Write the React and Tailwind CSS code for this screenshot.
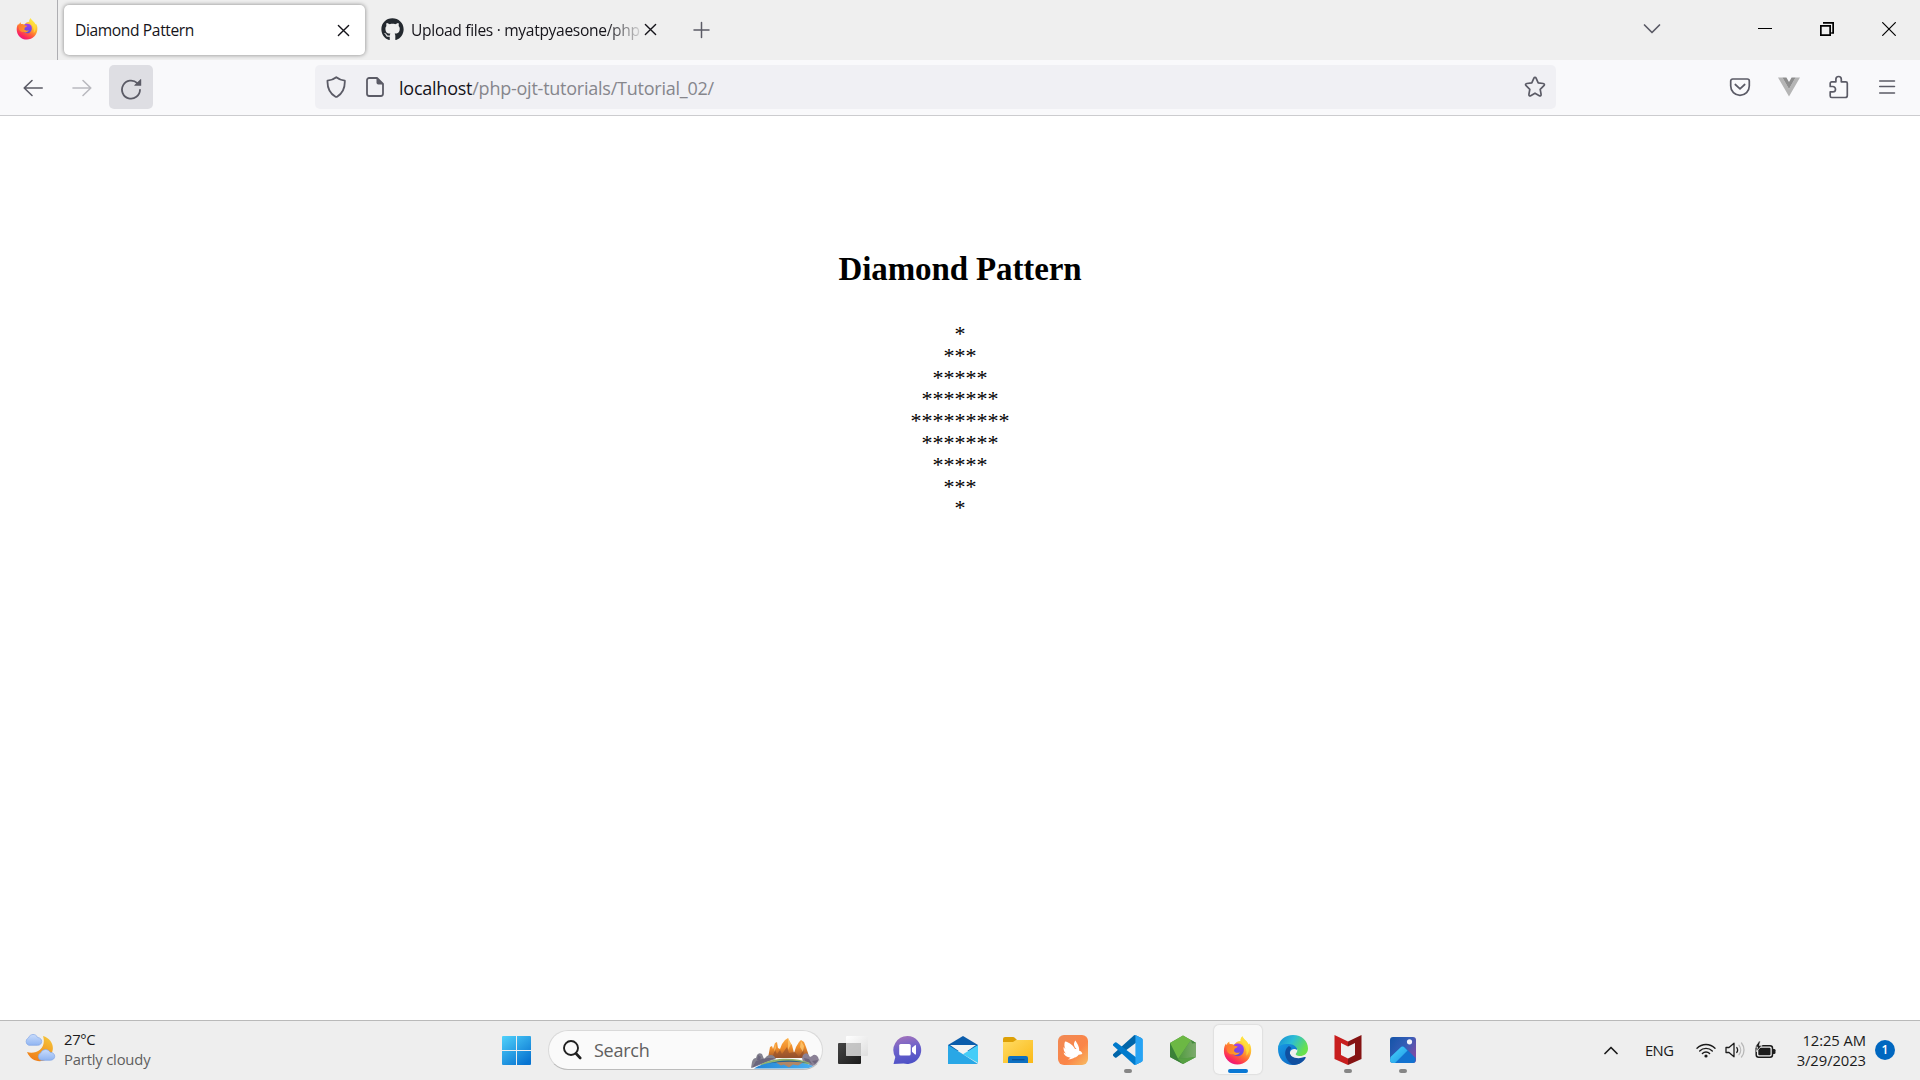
import React from "react";
import { FaGithub } from "react-icons/fa";

const diamond = [1, 3, 5, 7, 9, 7, 5, 3, 1];

function Firefox({ size, id }) {
  const a = id + "a", b = id + "b", c = id + "c";
  return (
    <svg width={size} height={size} viewBox="0 0 32 32">
      <defs>
        <linearGradient id={a} x1="0.8" y1="0.05" x2="0.25" y2="1">
          <stop offset="0" stopColor="#fff44f" />
          <stop offset="0.35" stopColor="#ffb52e" />
          <stop offset="0.6" stopColor="#ff6a35" />
          <stop offset="0.85" stopColor="#fb2460" />
          <stop offset="1" stopColor="#e31587" />
        </linearGradient>
        <linearGradient id={b} x1="0.6" y1="0" x2="0.4" y2="1">
          <stop offset="0" stopColor="#a03df5" />
          <stop offset="1" stopColor="#5b4fd8" />
        </linearGradient>
        <linearGradient id={c} x1="0" y1="0" x2="1" y2="0.4">
          <stop offset="0" stopColor="#ff7139" />
          <stop offset="1" stopColor="#ffa21f" />
        </linearGradient>
      </defs>
      <path fill={`url(#${a})`} d="M19.4 5.4C19.2 3 20.3 1.200 21.600.3c.3 3 5 4.600 6.800 9.200.4-.5.500-1 .5-1.500 1.600 2 2.400 5 2.200 8.500C30.800 25 24.200 31.400 16 31.400 7.600 31.400 1 25 1 16.600c0-3.300.8-6 2.300-8.200l.4 1.900C4.500 8.200 5.600 7 7 6.100c-.2 1 0 2 .4 2.800 1.800-.3 3.400 0 4.800.7 1.600-2.500 4-4 7.200-4.200z" />
      <path fill={`url(#${b})`} d="M11.500 10.400c2.700-3.200 8.500-2.800 10.700.8 2.400 5-.5 11.100-5.900 11.100-4.400 0-7.500-3.200-7.300-7.600 1-.5 1.700-1.500 2.500-4.300z" />
      <path fill={`url(#${c})`} d="M4 11c1.500-1.500 3.200-2 5-2l3 1.200c.9.700 2.300 1.100 4.200 1.100 0 1.400-2.300 2-3.200 2.600-.4 1-.8 1.800-.9 2.600 1.600 2.600 4.700 2.200 6.600 1.400-1.600 2.900-5.300 4-7.800 2.200C7 21 3 17.500 4 11z" />
      <path fill="#ffdf3d" opacity=".75" d="M19.400 5.400C19.300 3 20.300 1.200 21.600.3c.3 3 5 4.600 6.600 9.400 1.500 5 .4 9.300-2.400 12 .9-6.200-1.200-11-6.400-16.300z" />
    </svg>
  );
}

function Cross({ size, w = 1.5, color = "#15141a" }) {
  return (
    <svg width={size} height={size} viewBox="0 0 14 14" fill="none" stroke={color} strokeWidth={w} strokeLinecap="round">
      <path d="M1.500 1.500l11 11M12.500 1.500l-11 11" />
    </svg>
  );
}

function TabStrip() {
  return (
    <div className="flex h-[60px] items-center bg-[#efefef]">
      <div className="flex h-full w-[58px] items-center justify-center border-r border-[#aeaeb2] pr-[3px] pb-[2px]">
        <Firefox size={22} id="ft" />
      </div>
      <div className="ml-[6px] flex h-[50px] w-[301px] items-center justify-between rounded-[5px] bg-white pl-[11px] pr-[15px] shadow-[0_0_4px_rgba(0,0,0,0.45)]">
        <span className="pt-[2px] text-[15.600px] tracking-[-0.380px] text-[#15141a]">Diamond Pattern</span>
        <Cross size={13} />
      </div>
      <div className="ml-[16px] flex w-[276px] items-center">
        <FaGithub size={23} color="#24292f" />
        <div className="ml-[7px] w-[231px] whitespace-nowrap pt-[2px] text-[15.600px] tracking-[-0.320px] text-[#15141a] [mask-image:linear-gradient(to_right,black_195px,transparent_234px)]">
          Upload files · myatpyaesone/php
        </div>
        <div className="ml-[2px] flex-none"><Cross size={13} /></div>
      </div>
      <svg className="ml-[35px]" width="18" height="18" viewBox="0 0 18 18" stroke="#5b5b66" strokeWidth="1.500" strokeLinecap="round">
        <path d="M9.500 1.500v15M2 9h15" />
      </svg>
      <div className="ml-auto flex h-full items-center pb-[3px]">
        <svg className="mr-[97px]" width="18" height="12" viewBox="0 0 18 12" fill="none" stroke="#5b5b66" strokeWidth="1.700" strokeLinecap="round" strokeLinejoin="round">
          <path d="M1.500 2L9 9.500 16.500 2" />
        </svg>
        <div className="h-px w-[14px] bg-black" />
        <svg className="ml-[48px]" width="14" height="14" viewBox="0 0 14 14" fill="none" stroke="#000">
          <path strokeWidth="1.700" d="M.85 3.850h9.300v9.300H.85z" />
          <path strokeWidth="1.700" d="M3 .85h10.150V11h-2" />
        </svg>
        <svg className="ml-[48px] mr-[24px]" width="14" height="14" viewBox="0 0 14 14" stroke="#000" strokeWidth="1.200">
          <path d="M.3.3l13.400 13.400M13.700.3L.3 13.700" />
        </svg>
      </div>
    </div>
  );
}

const line = { fill: "none", stroke: "#5b5b66", strokeWidth: 1.6, strokeLinecap: "round", strokeLinejoin: "round" };

function Toolbar() {
  return (
    <div className="flex h-[56px] items-center border-b border-[#cccccf] bg-[#f9f9fb] pb-[1px]">
      <svg className="ml-[23px] mt-[1px]" width="20" height="18" viewBox="0 0 20 18" {...line}>
        <path d="M9 1.500L1.200 9 9 16.500M1.200 9h18" />
      </svg>
      <svg className="ml-[29px] mt-[1px] opacity-40" width="20" height="18" viewBox="0 0 20 18" {...line}>
        <path d="M11 1.500L18.800 9 11 16.500M18.800 9H1" />
      </svg>
      <div className="ml-[17px] flex h-[44px] w-[44px] items-center justify-center rounded-[5px] bg-[#dedee3]">
        <svg className="mt-[3px]" width="22" height="22" viewBox="0 0 22 22" {...line}>
          <path strokeWidth="1.800" d="M17.300 5.200A9 9 0 1 0 20 11.800" />
          <path fill="#5b5b66" stroke="none" d="M20.500 1.200c.4-.4.700-.2.700.3v6.300h-6.300c-.6 0-.8-.3-.4-.7z" />
        </svg>
      </div>
      <div className="ml-[162px] flex h-[44px] w-[1241px] items-center rounded-[5px] bg-[#f0f0f4]">
        <svg className="ml-[11px]" width="20" height="22" viewBox="0 0 20 22" {...line}>
          <path strokeWidth="1.800" d="M10.300 1.200c2.600 2.200 5.500 3 8.500 3.400.3 7.600-2 12.600-7.700 16.100q-.8.500-1.600 0C3.500 17.200 1.200 12.200 1.500 4.600 4.800 4.200 7.700 3.400 10.300 1.200z" />
        </svg>
        <svg className="ml-[20px]" width="18" height="20" viewBox="0 0 18 20" {...line}>
          <path strokeWidth="1.800" d="M3.200 1h7.800l6 6v9.800a2.200 2.200 0 0 1-2.200 2.200H3.200A2.200 2.200 0 0 1 1 16.800V3.200A2.200 2.200 0 0 1 3.200 1z" />
          <path fill="#5b5b66" stroke="none" d="M10.500 1l6.500 6.500h-4.700a1.800 1.800 0 0 1-1.800-1.800z" />
        </svg>
        <div className="ml-[15px] whitespace-nowrap pt-[3px] text-[18px] tracking-[-0.240px] text-[#15141a]">
          localhost<span className="text-[#86868c]">/php-ojt-tutorials/Tutorial_02/</span>
        </div>
        <svg className="ml-auto mr-[10px]" width="22" height="22" viewBox="0 0 22 22" {...line}>
          <path strokeWidth="1.700" d="M9.900 2.200c.5-1.100 1.700-1.100 2.200 0l2.100 4.600 5 .7c1.300.2 1.600 1.300.7 2.200l-3.700 3.600.9 5.100c.2 1.200-.8 1.800-1.800 1.300L11 17.200l-4.300 2.500c-1 .5-2-.1-1.800-1.300l.9-5.100-3.700-3.600c-.9-.9-.6-2 .7-2.200l5-.7z" />
        </svg>
      </div>
      <svg className="ml-[173px]" width="22" height="20" viewBox="0 0 22 20" {...line}>
        <path strokeWidth="1.700" d="M3.700 2h14.600a2 2 0 0 1 2 2v5a9.300 9.300 0 0 1-18.600 0V4a2 2 0 0 1 2-2z" />
        <path strokeWidth="1.700" d="M6.300 7.500l4.700 4.300 4.700-4.300" />
      </svg>
      <svg className="ml-[27px]" width="22" height="20" viewBox="0 0 22 20">
        <path fill="#b5b5b5" d="M0 .5h4.400L11 12 17.600.5H22L11 19.500z" />
        <path fill="#8d8d8d" d="M4.400.5h4L11 5 13.600.5h4L11 12z" />
      </svg>
      <svg className="ml-[28px]" width="22" height="24" viewBox="0 0 22 24" {...line}>
        <path strokeWidth="1.700" d="M3.700 22.500h13.600a2 2 0 0 0 2-2V8.300a1.500 1.500 0 0 0-1.500-1.500h-4.500V4.200a2.700 2.700 0 0 0-5.400 0v2.600H3.700a1.500 1.500 0 0 0-1.500 1.500v3.200h2.600a2.600 2.600 0 0 1 0 5.400H2.200V21a1.500 1.500 0 0 0 1.500 1.500z" />
      </svg>
      <svg className="ml-[28px]" width="18" height="16" viewBox="0 0 18 16" {...line}>
        <path strokeWidth="1.500" d="M1.700 2h14.800M1.700 7.500h14.800M1.700 14h14.800" />
      </svg>
    </div>
  );
}

function Weather() {
  return (
    <svg width="32" height="30" viewBox="0 0 32 30">
      <defs>
        <linearGradient id="moon" x1="0.7" y1="0" x2="0.2" y2="1">
          <stop offset="0" stopColor="#f5c238" /><stop offset="1" stopColor="#ef7a16" />
        </linearGradient>
        <linearGradient id="cloud" x1="0" y1="0" x2="0" y2="1">
          <stop offset="0" stopColor="#c9dcfb" /><stop offset="1" stopColor="#8fb4f2" />
        </linearGradient>
      </defs>
      <path fill="url(#moon)" d="M19 3c9 2.500 12.300 11.500 8 18.500C22 30.500 8 31 3 19c9 3 20-4 16-16z" />
      <path fill="url(#cloud)" stroke="#82a6e6" strokeWidth=".7" d="M4.800 12.300a4 4 0 0 1-.4-7.400C6 .5 12 .3 13.600 4.500c5.500.2 5.500 7.800 0 7.800z" />
      <path fill="url(#cloud)" stroke="#82a6e6" strokeWidth=".7" d="M17 27.300a4 4 0 0 1-.2-7.500c1.800-4.200 7.500-4.200 9.200-.6 6.300.2 6.300 8.100 0 8.100z" />
    </svg>
  );
}

function SearchArt() {
  return (
    <svg width="68" height="32" viewBox="0 0 68 32">
      <defs>
        <linearGradient id="peak" x1="0" y1="0" x2=".1" y2="1">
          <stop offset="0" stopColor="#ffb24a" /><stop offset=".55" stopColor="#ee8c2a" /><stop offset="1" stopColor="#a2592f" />
        </linearGradient>
        <linearGradient id="lake" x1="0" y1="0" x2="1" y2="0">
          <stop offset="0" stopColor="#2185d6" /><stop offset="1" stopColor="#4fb2f2" />
        </linearGradient>
      </defs>
      <path fill="url(#peak)" d="M17 21l2-11 2-1 1 3 2-6 2-1 1 6 2 1 2-5 3-4 3-2 2 4 2 3 2 8 2-6 3-5 2-2 3 2 2 5 2 6 1 5z" />
      <path fill="#8f4c2c" d="M21 21l3-8 2 4 3-4 2 4 5-7 2 6 6-1 4 5 5-8-1 9z" opacity=".6" />
      <path fill="#ffd07a" d="M37 1l3 6-3 6 0-8zM50 4l3 5-1 6-3-5zM24 6l1 5-2 4z" opacity=".7" />
      <path fill="#84828f" d="M0 31l1-6q1-4 4-4l1-3q2-3 5-1l2 5 3-3q4-2 7 0l2 3L9 27z" />
      <path fill="#655f78" d="M1 31l4-7 6-2 6-1 7 0-13 6zM7 18l3 2-1 3-3 0z" opacity=".8" />
      <path fill="#8b8196" d="M51 21l1-3q3-3 5-1l2 3 2-1q3-3 6 1l1 3-2 5-5 1-9-4z" />
      <path fill="#665e75" d="M53 21l5 1 3 5-7-3zM61 24l6-1-3 4z" opacity=".8" />
      <path fill="#91b26e" d="M9 28c12-8 36-8 50-2l-4 3H14z" />
      <path fill="url(#lake)" d="M3 31.500c14-9 46-9 62-1l1 1z" />
      <path fill="#29608f" d="M18 26.500c11-4 27-4 40 0-12-2-28-2-40 0z" />
      <path fill="#c08457" d="M25 25.500l5 3 3-1 5 3 4-3 5 1 5-3c-9-1-18-1-27 0z" opacity=".9" />
    </svg>
  );
}

const icons = {
  view: (
    <svg width="32" height="32" viewBox="0 0 32 32">
      <defs>
        <linearGradient id="tv" x1="0" y1="0" x2="1" y2="1"><stop offset="0" stopColor="#454545" /><stop offset="1" stopColor="#1b1b1b" /></linearGradient>
        <linearGradient id="tw" x1="0" y1="0" x2="1" y2="1"><stop offset="0" stopColor="#fff" /><stop offset="1" stopColor="#dedede" /></linearGradient>
      </defs>
      <rect x="1" y="9" width="23" height="21" rx="1" fill="url(#tv)" />
      <rect x="9" y="2" width="22" height="20" rx="1" fill="url(#tw)" />
      <path d="M9 9h15v13H9z" fill="#b5b5b5" opacity=".75" />
    </svg>
  ),
  chat: (
    <svg width="32" height="32" viewBox="0 0 32 32">
      <defs><linearGradient id="ch" x1=".3" y1="0" x2=".5" y2="1"><stop offset="0" stopColor="#a272bb" /><stop offset=".45" stopColor="#6d62cb" /><stop offset="1" stopColor="#4c50c6" /></linearGradient></defs>
      <path fill="url(#ch)" d="M15.500 2a14 14 0 1 1-4 27.500L1.500 30l1.800-7A14 14 0 0 1 15.500 2z" />
      <rect x="7.200" y="10" width="11.500" height="11.500" rx="1.500" fill="#fff" />
      <path fill="#fff" d="M20 13.800l3-2.600q1-.5 1 .5v8.200q0 1-1 .5l-3-2.600z" />
    </svg>
  ),
  mail: (
    <svg width="32" height="32" viewBox="0 0 32 32">
      <path fill="#0b5cab" d="M1 11L16 2l15 9v6H1z" />
      <path fill="#f3f3f3" d="M3 11h26l-13 9z" />
      <path fill="#45cdf8" d="M31 11v18l-15-8.700z" />
      <path fill="#29a7e6" d="M1 11l15 9.200L31 30H1z" />
    </svg>
  ),
  folder: (
    <svg width="32" height="32" viewBox="0 0 32 32">
      <defs><linearGradient id="fo" x1="0" y1="0" x2="1" y2="1"><stop offset="0" stopColor="#ffdc65" /><stop offset="1" stopColor="#fbb916" /></linearGradient></defs>
      <path fill="#dda006" d="M1 5q0-2 2-2h8q1 0 2 1l2 2h14v5H1z" />
      <path fill="url(#fo)" d="M1 8h10l3-2h17v23H1z" />
      <path fill="#0d70c2" d="M6 29v-5q0-2 2-2h16q2 0 2 2v5z" />
      <path stroke="#0a4f91" strokeWidth="1.200" d="M10 25.700h12.500" />
    </svg>
  ),
  swift: (
    <svg width="32" height="32" viewBox="0 0 32 32">
      <defs><linearGradient id="sw" x1="0" y1="0" x2="1" y2="1"><stop offset="0" stopColor="#f08a55" /><stop offset=".6" stopColor="#fb8548" /><stop offset="1" stopColor="#f7bd63" /></linearGradient></defs>
      <rect x="1" y="1" width="30" height="30" rx="6" fill="url(#sw)" />
      <path fill="#fff" d="M8 7.500c4 .5 8.500 4 10 7.500.6-.2 1.300-.1 1.800.3C16.800 12.500 16 9.500 18.500 6.500c1.500 3 4.300 6.500 3.600 10.300 1.500.1 3.200 1.400 3.200 3.200-1.300.5-2.500.6-3.700.8-.9 1.600-2.300 2.400-4 2.700-1.600 1.200-3.400 1.800-6.600 2l2.600-1.800C9.500 23 7.300 21.300 6.500 18.500l2.500 1.200C7 17.700 6.300 15.500 6.600 13l1.900 2.300C7.200 12.800 7 10 8 7.500z" />
    </svg>
  ),
  code: (
    <svg width="30" height="30" viewBox="0 0 256 254">
      <path fill="#0065A9" d="M246.135 26.873L193.409 1.488a15.940 15.940 0 0 0-18.190 3.092L2.656 161.942c-4.641 4.232-4.636 11.543.012 15.768l14.099 12.817a10.655 10.655 0 0 0 13.610.606L238.187 33.443c6.972-5.289 16.985-.316 16.985 8.435z" />
      <path fill="#007ACC" d="M246.135 226.816l-52.726 25.385a15.940 15.940 0 0 1-18.190-3.092L2.656 91.747c-4.641-4.231-4.636-11.542.012-15.768l14.099-12.817a10.655 10.655 0 0 1 13.610-.606l207.810 157.690c6.972 5.289 16.985.316 16.985-8.435z" />
      <path fill="#27a3f4" d="M193.428 252.134a15.940 15.940 0 0 1-18.188-3.092c5.901 5.902 15.994 1.722 15.994-6.624V11.273c0-8.346-10.093-12.526-15.994-6.625a15.940 15.940 0 0 1 18.188-3.092l52.717 25.352A16 16 0 0 1 255.200 41.330v171.030a16 16 0 0 1-9.055 14.422z" />
    </svg>
  ),
  node: (
    <svg width="32" height="32" viewBox="0 0 32 32">
      <defs><linearGradient id="nd" x1="0" y1="0" x2="1" y2="0"><stop offset="0" stopColor="#4f9a3c" /><stop offset="1" stopColor="#7dab6e" /></linearGradient></defs>
      <path fill="#4b9440" d="M16 1.500L29 9v14L16 30 3 23V9z" />
      <path fill="#6cb844" d="M16 1.500L24 6 11 25 3 9z" />
      <path fill="url(#nd)" d="M24 6l5 3v14l-8.500 1L11 25z" />
      <path fill="#3a8138" d="M3 9l8 16 5 5L3 23z" />
      <path fill="#57a043" d="M11 25l18-2-13 7z" />
      <path fill="#438b3d" d="M24 6l5 3-4 .5z" />
    </svg>
  ),
  edge: (
    <svg width="32" height="32" viewBox="0 0 32 32">
      <defs>
        <linearGradient id="e1" x1="0" y1="0" x2="1" y2=".45"><stop offset="0" stopColor="#1688d6" /><stop offset=".5" stopColor="#2cbdd5" /><stop offset="1" stopColor="#68e14c" /></linearGradient>
        <linearGradient id="e2" x1="0" y1="0" x2="1" y2="1"><stop offset="0" stopColor="#189be6" /><stop offset="1" stopColor="#0a5bbb" /></linearGradient>
      </defs>
      <path fill="url(#e2)" d="M1 15C1 8 8 7 14 9c5 1.500 7 5 6 7-2-2-6-1-7 2-1 5 6 9 15 6-3 5-7 7-12 7C7 31 1 24 1 15z" />
      <path fill="#104fa0" d="M12 12c-5 3-6 12 3 18.500 6 1 11-2 13.600-6.500.4-.8-.3-1.300-1-.9C20 26 11 23 13 16.500c.3-1 .8-2 1.500-2.600z" />
      <path fill="url(#e1)" d="M1 14C2 6 8 1 16 1c9 0 15 6 15 13.500 0 5-4 7.500-8 7.500-3 0-5-1.300-4-2.500 3-3 1-8-5.500-9.200C8 9.300 3 10 1 14z" />
    </svg>
  ),
  mcafee: (
    <svg width="32" height="32" viewBox="0 0 32 32">
      <path fill="#c81e1e" d="M2.500 1L16 7.500v5l-7-3.500v12l7 3.500V31L2.500 25z" />
      <path fill="#851313" d="M29.500 1L16 7.500v5l7-3.500v12l-7 3.500V31l13.500-6z" />
    </svg>
  ),
  photos: (
    <svg width="32" height="32" viewBox="0 0 32 32">
      <defs>
        <linearGradient id="p1" x1="0" y1="0" x2="1" y2=".6"><stop offset="0" stopColor="#1454a8" /><stop offset=".6" stopColor="#365db7" /><stop offset="1" stopColor="#7b4da6" /></linearGradient>
        <linearGradient id="p2" x1="0" y1="0" x2="1" y2="1"><stop offset="0" stopColor="#49d5fb" /><stop offset="1" stopColor="#1f97e6" /></linearGradient>
      </defs>
      <rect x="3" y="3" width="26" height="26" rx="3" fill="url(#p1)" />
      <path fill="#1372cf" d="M14 13q2-1.500 4 .5l10.500 10.500q.5 5-2.500 5H6z" />
      <path fill="url(#p2)" d="M3.500 23L13.500 13.500q2-2 4 0l3 3L8 29H6q-3 0-3-3z" />
      <circle cx="22.500" cy="7.800" r="2.600" fill="#f3f3fa" />
    </svg>
  ),
};

const apps = [
  ["view"], ["chat"], ["mail"], ["folder"], ["swift"], ["code", "run"], ["node"],
  ["firefox", "active"], ["edge"], ["mcafee", "run"], ["photos", "run"],
];

function Taskbar() {
  return (
    <div className="flex h-[60px] items-stretch border-t border-[#b9b9b9] bg-[#eeeeee]">
      <div className="flex w-[502px] items-start pl-[24px] pt-[12px]">
        <Weather />
        <div className="mt-[-4px] ml-[8px] text-[14.800px] leading-[20px]">
          <div className="tracking-[-0.300px] text-[#1b1b1b]">27°C</div>
          <div className="tracking-[-0.180px] text-[#5f5f5f]">Partly cloudy</div>
        </div>
      </div>
      <svg className="mt-[15px]" width="29" height="29" viewBox="0 0 29 29">
        <defs><linearGradient id="wn" gradientUnits="userSpaceOnUse" x1="0" y1="0" x2="22" y2="29"><stop offset="0" stopColor="#50d2fb" /><stop offset="1" stopColor="#0874d1" /></linearGradient></defs>
        <path fill="url(#wn)" d="M1 0h13v14H0V1q0-1 1-1zM15 0h13q1 0 1 1v13H15zM0 15h14v14H1q-1 0-1-1zM15 15h14v13q0 1-1 1H15z" />
      </svg>
      <div className="ml-[17px] mt-[9px] flex h-[40px] w-[275px] items-center overflow-hidden rounded-full border border-[#d9d9d9] border-b-[#bcbcbc] bg-[#fafafa]">
        <svg className="ml-[14px]" width="19" height="20" viewBox="0 0 19 20" fill="none" stroke="#202020">
          <circle cx="8" cy="8" r="7" strokeWidth="1.900" />
          <path strokeWidth="2.600" strokeLinecap="round" d="M13 13.500l4.200 4.500" />
        </svg>
        <span className="ml-[12px] text-[18px] tracking-[-0.250px] text-[#606060]">Search</span>
        <div className="ml-auto mr-[3px] mt-[5px]"><SearchArt /></div>
      </div>
      <div className="ml-[2px] flex">
        {apps.map(([name, state]) => (
          <div key={name} className="flex w-[55px] justify-center pt-[4px]">
            <div className={state === "active"
              ? "flex h-[49px] w-[48px] flex-col items-center rounded-[5px] bg-[#f8f8f8] pt-[9px] shadow-[0_0_2px_rgba(0,0,0,0.2)]"
              : "flex h-[49px] w-[48px] flex-col items-center pt-[9px]"}>
              <div className="flex h-[32px] items-center">
                {name === "firefox" ? <Firefox size={29} id="fb" /> : icons[name]}
              </div>
              {state === "active" && <div className="mt-[3px] h-[4px] w-[20px] rounded-full bg-[#0a78d4]" />}
              {state === "run" && <div className="mt-[3px] h-[4px] w-[8px] rounded-full bg-[#868686]" />}
            </div>
          </div>
        ))}
      </div>
      <div className="ml-auto flex items-center pr-[25px] text-[#1b1b1b]">
        <svg width="14" height="9" viewBox="0 0 14 9" fill="none" stroke="#1b1b1b" strokeWidth="1.700" strokeLinecap="round" strokeLinejoin="round">
          <path d="M1 7.500L7 1.500l6 6" />
        </svg>
        <span className="ml-[27px] w-[30px] whitespace-nowrap text-[14.800px] tracking-[-0.600px]">ENG</span>
        <svg className="ml-[21px] mt-[-1px]" width="20" height="16" viewBox="0 0 20 16" fill="none" stroke="#1b1b1b" strokeWidth="1.400" strokeLinecap="round">
          <path d="M1 6.200a12.700 12.700 0 0 1 18 0M3.700 9a8.900 8.900 0 0 1 12.600 0M6.400 11.600a5 5 0 0 1 7.200 0" />
          <circle cx="10" cy="14" r="1.600" fill="#1b1b1b" stroke="none" />
        </svg>
        <svg className="ml-[9px] mt-[-1px]" width="21" height="18" viewBox="0 0 21 18" fill="none" stroke="#1b1b1b" strokeWidth="1.300" strokeLinecap="round" strokeLinejoin="round">
          <path d="M1 6.500h3l5-4.300v13.600l-5-4.300H1z" />
          <path d="M11.800 6.500a4.500 4.500 0 0 1 0 5" />
          <path stroke="#b8b8b8" d="M14 4.300a7.500 7.500 0 0 1 0 9.400M16.500 2a11 11 0 0 1 0 14" />
        </svg>
        <svg className="ml-[9px] mt-[-2px]" width="21" height="18" viewBox="0 0 21 18">
          <rect x="1.200" y="4.800" width="16.300" height="11.500" rx="2.500" fill="none" stroke="#1b1b1b" strokeWidth="1.500" />
          <rect x="3.300" y="6.800" width="12.200" height="7.500" rx="1" fill="#1b1b1b" />
          <path fill="#1b1b1b" d="M18 8h1q1.500 0 1.500 1.300v2.500q0 1.300-1.500 1.300h-1z" />
          <path fill="#1b1b1b" stroke="#eeeeee" strokeWidth=".8" d="M4 0L0 6h2.500L1.500 10.500 7 4.600H4.300L5.500 0z" />
        </svg>
        <div className="mt-[-2px] ml-[14px] w-[76px] whitespace-nowrap text-[14.800px] leading-[20px]">
          <div className="flex justify-end tracking-[-0.080px]">12:25 AM</div>
          <div className="flex justify-end tracking-[-0.080px]">3/29/2023</div>
        </div>
        <div className="mt-[-2px] ml-[9px] flex h-[20px] w-[20px] items-center justify-center rounded-full bg-[#0067c0] text-[12px] font-semibold text-white">1</div>
      </div>
    </div>
  );
}

export default function App() {
  return (
    <div className="flex h-[1080px] w-[1920px] flex-col overflow-hidden bg-white font-['Open_Sans','Noto_Sans',sans-serif]">
      <TabStrip />
      <Toolbar />
      <main className="flex flex-1 flex-col items-center pt-[132px] font-['Liberation_Serif',serif] text-black">
        <h2 className="text-[33px] leading-[42px] font-bold tracking-[-0.120px]">Diamond Pattern</h2>
        <div className="mt-[33px] text-center text-[22px] leading-[21.800px]">
          {diamond.map((n, i) => (
            <div key={i}>{"*".repeat(n)}</div>
          ))}
        </div>
      </main>
      <Taskbar />
    </div>
  );
}
